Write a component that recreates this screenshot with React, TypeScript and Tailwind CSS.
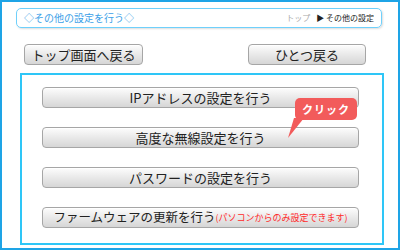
const font = { fontFamily: '"Noto Sans CJK JP", "Noto Sans", sans-serif' }

function GrayButton({ className, children }: { className: string; children: React.ReactNode }) {
  return (
    <div
      className={`flex items-center justify-center whitespace-nowrap rounded-[4px] border border-[#a6a6a6] bg-gradient-to-b from-[#fdfdfd] via-[#e9e9e9] to-[#d6d6d6] text-[#222] shadow-[inset_0_1px_0_#fff] ${className}`}
    >
      {children}
    </div>
  )
}

export default function App() {
  const items = ["IPアドレスの設定を行う", "高度な無線設定を行う", "パスワードの設定を行う"]
  return (
    <div style={font} className="w-[400px] h-[250px] border-2 border-[#1ea4e6] bg-white pl-[14px] pt-[6px] overflow-hidden">
      <div className="flex items-center justify-between w-[366px] h-[20px] rounded-[5px] border border-[#6fd0fb] shadow-[1px_1px_2px_#ddd] pl-[7px] pr-[7px]">
        <span className="text-[10px] leading-none text-[#3c9fe8]">◇その他の設定を行う◇</span>
        <span className="text-[8px] leading-none">
          <span className="text-[#aaa]">トップ</span>
          <span className="text-[#222] ml-[6px]">▶ その他の設定</span>
        </span>
      </div>

      <div className="flex mt-[16px] pl-[8px]">
        <GrayButton className="w-[119px] h-[21px] text-[13px] leading-none">トップ画面へ戻る</GrayButton>
        <GrayButton className="w-[118px] h-[21px] text-[13px] leading-none ml-[105px]">ひとつ戻る</GrayButton>
      </div>

      <div className="relative mt-[8px] ml-[4px] w-[364px] h-[172px] border-2 border-[#2ec6f7] pt-[12px] pl-[20px]">
        <div className="flex flex-col gap-[19px]">
          {items.map((t) => (
            <GrayButton key={t} className="w-[317px] h-[21px] text-[13px] leading-none">
              {t}
            </GrayButton>
          ))}
          <GrayButton className="w-[317px] h-[21px] text-[12.5px] leading-none">
            ファームウェアの更新を行う
            <span className="text-[9px] text-[#ff2a2a]">(パソコンからのみ設定できます)</span>
          </GrayButton>
        </div>

        <div className="absolute left-[273px] top-[23px]">
          <div className="relative w-[62px] h-[22px] rounded-[5px] bg-[#f25b5b] flex items-center justify-center text-white text-[11px] font-bold leading-none tracking-[1px]">
            クリック
          </div>
          <svg className="absolute left-[-8px] top-[20px]" width="22" height="22" viewBox="0 0 22 22">
            <polygon points="7,0 17,0 1,20" fill="#f25b5b" />
          </svg>
        </div>
      </div>
    </div>
  )
}
